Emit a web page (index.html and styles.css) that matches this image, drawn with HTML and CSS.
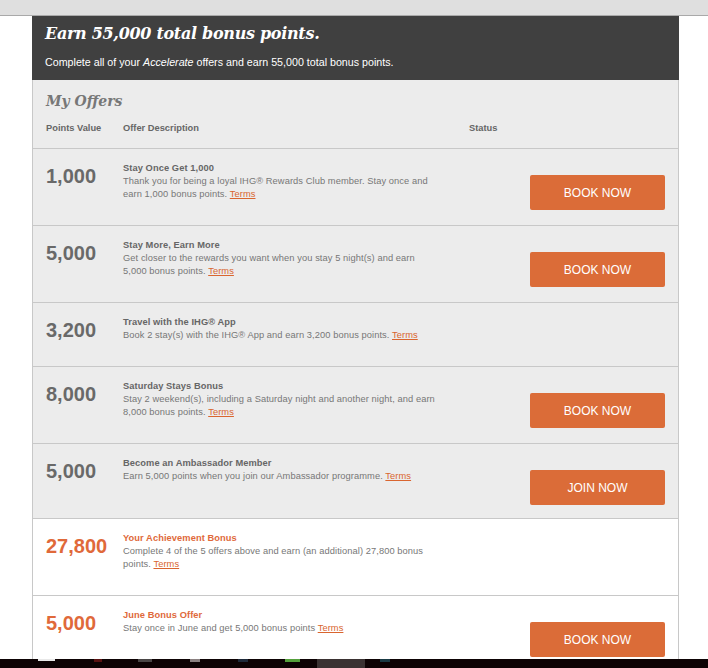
FILE: index.html
```html
<!DOCTYPE html>
<html lang="en">
<head>
  <meta charset="UTF-8" />
  <meta name="viewport" content="width=device-width, initial-scale=1.0" />
  <title>My Offers - Accelerate</title>
  <link rel="stylesheet" href="styles.css">
</head>
<body>

  <!-- Browser strip -->
  <div class="topbar"></div>

  <div class="page">

    <!-- Promo header -->
    <section class="hero">
      <h1>Earn 55,000 total bonus points.</h1>
      <p>Complete all of your <em>Accelerate</em> offers and earn 55,000 total bonus points.</p>
    </section>

    <!-- Offers table -->
    <section class="offers">
      <div class="offers-head">
        <h2>My Offers</h2>
        <div class="cols">
          <span>Points Value</span>
          <span>Offer Description</span>
          <span>Status</span>
        </div>
      </div>

      <div class="offer-row">
        <div class="points">1,000</div>
        <div class="desc">
          <h3>Stay Once Get 1,000</h3>
          <p>Thank you for being a loyal IHG® Rewards Club member. Stay once and earn 1,000 bonus points. <a href="#">Terms</a></p>
        </div>
        <div class="status"><button class="btn">Book Now</button></div>
      </div>

      <div class="offer-row">
        <div class="points">5,000</div>
        <div class="desc">
          <h3>Stay More, Earn More</h3>
          <p>Get closer to the rewards you want when you stay 5 night(s) and earn 5,000 bonus points. <a href="#">Terms</a></p>
        </div>
        <div class="status"><button class="btn">Book Now</button></div>
      </div>

      <div class="offer-row">
        <div class="points">3,200</div>
        <div class="desc">
          <h3>Travel with the IHG® App</h3>
          <p>Book 2 stay(s) with the IHG® App and earn 3,200 bonus points. <a href="#">Terms</a></p>
        </div>
        <div class="status"></div>
      </div>

      <div class="offer-row">
        <div class="points">8,000</div>
        <div class="desc">
          <h3>Saturday Stays Bonus</h3>
          <p>Stay 2 weekend(s), including a Saturday night and another night, and earn 8,000 bonus points. <a href="#">Terms</a></p>
        </div>
        <div class="status"><button class="btn">Book Now</button></div>
      </div>

      <div class="offer-row">
        <div class="points">5,000</div>
        <div class="desc">
          <h3>Become an Ambassador Member</h3>
          <p>Earn 5,000 points when you join our Ambassador programme. <a href="#">Terms</a></p>
        </div>
        <div class="status"><button class="btn">Join Now</button></div>
      </div>

      <div class="offer-row bonus">
        <div class="points">27,800</div>
        <div class="desc">
          <h3>Your Achievement Bonus</h3>
          <p>Complete 4 of the 5 offers above and earn (an additional) 27,800 bonus points. <a href="#">Terms</a></p>
        </div>
        <div class="status"></div>
      </div>

      <div class="offer-row bonus">
        <div class="points">5,000</div>
        <div class="desc">
          <h3>June Bonus Offer</h3>
          <p>Stay once in June and get 5,000 bonus points <a href="#">Terms</a></p>
        </div>
        <div class="status"><button class="btn">Book Now</button></div>
      </div>
    </section>

  </div>

  <!-- Taskbar peeking in at the bottom -->
  <div class="taskbar">
    <span class="tb-icon tb-start"></span>
    <span class="tb-icon tb-red"></span>
    <span class="tb-icon tb-grey"></span>
    <span class="tb-icon tb-white"></span>
    <span class="tb-icon tb-blue"></span>
    <span class="tb-icon tb-green"></span>
    <span class="tb-active"></span>
    <span class="tb-icon tb-teal"></span>
  </div>

</body>
</html>
```

FILE: styles.css
```css
html {
  overflow: hidden;
}

body {
  margin: 0;
  background-color: #ffffff;
  font-family: "Liberation Sans", Arial, sans-serif;
  color: #777;
}

.topbar {
  height: 15px;
  background-color: #dfdfdf;
  border-bottom: 1px solid #a9a9a9;
}

.page {
  width: 647px;
  margin-left: 32px;
}

/* Promo header */
.hero {
  background-color: #404040;
  color: #fff;
  padding: 7px 13px 11px;
}

.hero h1 {
  margin: 0;
  font-family: "DejaVu Serif", Georgia, serif;
  font-style: italic;
  font-weight: bold;
  font-size: 16px;
  line-height: 22px;
  letter-spacing: -0.3px;
}

.hero p {
  margin: 10px 0 0;
  font-size: 10.7px;
  line-height: 14px;
}

/* Offers table */
.offers {
  background-color: #ececec;
  border-left: 1px solid #c8c8c8;
  border-right: 1px solid #c8c8c8;
}

.offers-head {
  padding: 11px 13px 13px;
  border-bottom: 1px solid #c8c8c8;
}

.offers-head h2 {
  margin: 0;
  font-family: "DejaVu Serif", Georgia, serif;
  font-style: italic;
  font-weight: bold;
  font-size: 14px;
  line-height: 20px;
  color: #777;
}

.cols {
  display: grid;
  grid-template-columns: 77px 346px 1fr;
  margin-top: 11px;
  font-size: 9.3px;
  font-weight: bold;
  line-height: 13px;
  color: #666;
}

.offer-row {
  display: grid;
  grid-template-columns: 77px 346px 1fr;
  padding: 0 13px;
  border-bottom: 1px solid #c8c8c8;
}

.offer-row.bonus {
  background-color: #fff;
}

.points {
  padding-top: 15px;
  font-size: 20px;
  font-weight: bold;
  line-height: 24px;
  color: #696969;
}

.desc {
  padding: 13px 0 24px;
  max-width: 313px;
  font-size: 9.3px;
  line-height: 13px;
  letter-spacing: 0.08px;
}

.desc h3 {
  margin: 0;
  font-size: 9.3px;
  font-weight: bold;
  color: #666;
}

.desc p {
  margin: 0;
  color: #777;
}

.desc a {
  color: #d9652f;
}

.bonus .points,
.bonus .desc h3 {
  color: #e0693a;
}

.status {
  display: flex;
  justify-content: flex-end;
  align-items: flex-start;
  padding: 26px 0 13px;
}

.btn {
  width: 135px;
  height: 35px;
  border: none;
  border-radius: 2px;
  background-color: #db6c38;
  color: #fff;
  font-family: "Liberation Sans", Arial, sans-serif;
  font-size: 12px;
  text-transform: uppercase;
  cursor: pointer;
}

/* Windows taskbar */
.taskbar {
  position: fixed;
  left: 0;
  right: 0;
  bottom: 0;
  height: 9px;
  background-color: #0d0304;
}

.tb-icon,
.tb-active {
  position: absolute;
  top: 0;
  height: 3px;
}

.tb-active {
  left: 317px;
  width: 48px;
  height: 9px;
  background-color: #3a3232;
}

.tb-start { left: 38px; width: 17px; height: 2px; background-color: #e8e8e8; }
.tb-red { left: 94px; width: 8px; background-color: #5a1212; }
.tb-grey { left: 138px; width: 14px; background-color: #4a4646; }
.tb-white { left: 190px; width: 10px; background-color: #8a8080; }
.tb-blue { left: 238px; width: 10px; background-color: #1e2a3a; }
.tb-green { left: 285px; width: 15px; background-color: #55a03c; }
.tb-teal { left: 380px; width: 10px; background-color: #1a3a44; }
```
